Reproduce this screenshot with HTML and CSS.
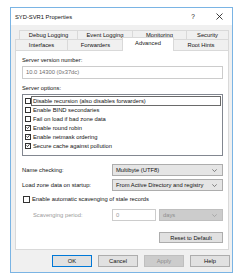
FILE: index.html
```html
<!DOCTYPE html>
<html lang="en">
<head>
    <meta charset="UTF-8">
    <title>SYD-SVR1 Properties</title>
    <link rel="stylesheet" href="styles.css">
</head>
<body>
    <div class="dialog">
        <div class="titlebar">
            <span class="title">SYD-SVR1 Properties</span>
            <span class="help-btn">?</span>
            <span class="close-btn">
                <svg width="7" height="7" viewBox="0 0 7 7"><path d="M0.5 0.5 L6.5 6.5 M6.5 0.5 L0.5 6.5" stroke="#111" stroke-width="0.8" fill="none"/></svg>
            </span>
        </div>

        <div class="tabs">
            <div class="tab-row back">
                <div class="tab w58">Debug Logging</div>
                <div class="tab w55">Event Logging</div>
                <div class="tab w54">Monitoring</div>
                <div class="tab w43 last">Security</div>
            </div>
            <div class="tab-row front">
                <div class="tab w52">Interfaces</div>
                <div class="tab w56">Forwarders</div>
                <div class="tab selected">Advanced</div>
                <div class="tab w56 last">Root Hints</div>
            </div>
        </div>

        <div class="panel">
            <div class="label">Server version number:</div>
            <div class="textbox readonly">10.0 14300 (0x37dc)</div>

            <div class="label gap">Server options:</div>
            <div class="listbox">
                <div class="item">
                    <span class="check"></span>
                    <span class="item-text focused">Disable recursion (also disables forwarders)</span>
                </div>
                <div class="item">
                    <span class="check"></span>
                    <span class="item-text">Enable BIND secondaries</span>
                </div>
                <div class="item">
                    <span class="check"></span>
                    <span class="item-text">Fail on load if bad zone data</span>
                </div>
                <div class="item">
                    <span class="check on"><svg width="5" height="5" viewBox="0 0 5 5"><path d="M0.6 2.4 L1.9 3.8 L4.4 0.9" stroke="#111" stroke-width="1" fill="none"/></svg></span>
                    <span class="item-text">Enable round robin</span>
                </div>
                <div class="item">
                    <span class="check on"><svg width="5" height="5" viewBox="0 0 5 5"><path d="M0.6 2.4 L1.9 3.8 L4.4 0.9" stroke="#111" stroke-width="1" fill="none"/></svg></span>
                    <span class="item-text">Enable netmask ordering</span>
                </div>
                <div class="item">
                    <span class="check on"><svg width="5" height="5" viewBox="0 0 5 5"><path d="M0.6 2.4 L1.9 3.8 L4.4 0.9" stroke="#111" stroke-width="1" fill="none"/></svg></span>
                    <span class="item-text">Secure cache against pollution</span>
                </div>
            </div>

            <div class="field-row first">
                <span class="field-label">Name checking:</span>
                <div class="combo wide">
                    <span>Multibyte (UTF8)</span>
                    <svg width="5" height="3" viewBox="0 0 5 3"><path d="M0.3 0.4 L2.5 2.5 L4.7 0.4" stroke="#555" stroke-width="0.7" fill="none"/></svg>
                </div>
            </div>
            <div class="field-row">
                <span class="field-label">Load zone data on startup:</span>
                <div class="combo wide">
                    <span>From Active Directory and registry</span>
                    <svg width="5" height="3" viewBox="0 0 5 3"><path d="M0.3 0.4 L2.5 2.5 L4.7 0.4" stroke="#555" stroke-width="0.7" fill="none"/></svg>
                </div>
            </div>

            <div class="check-row">
                <span class="check big"></span>
                <span>Enable automatic scavenging of stale records</span>
            </div>

            <div class="field-row scav">
                <span class="field-label disabled">Scavenging period:</span>
                <div class="textbox small disabled-input">0</div>
                <div class="combo days">
                    <span>days</span>
                    <svg width="5" height="3" viewBox="0 0 5 3"><path d="M0.3 0.4 L2.5 2.5 L4.7 0.4" stroke="#9a9a9a" stroke-width="0.7" fill="none"/></svg>
                </div>
            </div>

            <div class="reset-row">
                <button class="btn reset">Reset to Default</button>
            </div>
        </div>

        <div class="button-bar">
            <button class="btn default">OK</button>
            <button class="btn">Cancel</button>
            <button class="btn disabled">Apply</button>
            <button class="btn">Help</button>
        </div>
    </div>
</body>
</html>
```

FILE: styles.css
```css
body {
    margin: 0;
    padding: 7px 9px 0 10px;
    background-color: #ffffff;
    font-family: "Liberation Sans", Arial, sans-serif;
    font-size: 5.8px;
    line-height: 9px;
    color: #111;
}

.dialog {
    width: 223px;
    height: 266px;
    box-sizing: border-box;
    border: 1px solid #7ab4e4;
    background-color: #f0f0f0;
}

/* Title bar */
.titlebar {
    height: 17px;
    background-color: #ffffff;
    display: flex;
    align-items: center;
    padding-left: 4px;
}

.title {
    flex: 1;
    padding-top: 1px;
}

.help-btn {
    width: 26px;
    text-align: center;
    font-size: 6.5px;
}

.close-btn {
    width: 26px;
    display: flex;
    justify-content: center;
}

/* Tabs */
.tabs {
    margin-top: 5px;
    padding-left: 4px;
}

.tab-row {
    display: flex;
}

.tab-row.back {
    margin-left: 4px;
    height: 9px;
}

.tab-row.front {
    height: 11px;
    align-items: flex-end;
}

.tab {
    box-sizing: border-box;
    height: 100%;
    border-top: 1px solid #d9d9d9;
    border-left: 1px solid #d9d9d9;
    text-align: center;
    line-height: 9px;
    background-color: #f0f0f0;
}

.tab.last {
    border-right: 1px solid #d9d9d9;
}

.tab-row.front .tab {
    line-height: 10px;
}

.w58 { width: 58px; }
.w55 { width: 55px; }
.w54 { width: 54px; }
.w43 { width: 43px; }
.w52 { width: 52px; }
.w56 { width: 56px; }

.tab.selected {
    position: relative;
    z-index: 1;
    width: 52px;
    height: 14px;
    margin: 0 -1px -1px;
    border: 1px solid #d9d9d9;
    border-bottom: none;
    background-color: #ffffff;
    line-height: 10px;
}

/* Panel */
.panel {
    margin-left: 4px;
    width: 214px;
    height: 200px;
    box-sizing: border-box;
    border: 1px solid #d9d9d9;
    background-color: #ffffff;
    padding: 5px 5px 0 6px;
}

.label.gap {
    margin-top: 5px;
}

.textbox {
    box-sizing: border-box;
    height: 13px;
    margin-top: 1px;
    border: 1px solid #cccccc;
    padding-left: 3px;
    line-height: 11px;
    background-color: #ffffff;
}

.textbox.readonly {
    color: #6d6d6d;
}

.listbox {
    box-sizing: border-box;
    height: 62px;
    margin-top: 1px;
    border: 1px solid #828790;
    padding: 1px 1px 0 2px;
}

.item {
    display: flex;
    align-items: center;
    height: 9px;
}

.check {
    box-sizing: border-box;
    width: 6px;
    height: 6px;
    border: 1px solid #333;
    background-color: #fff;
    display: flex;
    align-items: center;
    justify-content: center;
    flex-shrink: 0;
}

.check.big {
    width: 7px;
    height: 7px;
}

.item-text {
    flex: 1;
    padding-left: 1px;
    line-height: 8px;
    border: 1px solid transparent;
}

.item-text.focused {
    border-color: #6a6a6a;
}

/* Field rows */
.field-row {
    display: flex;
    align-items: center;
    height: 12px;
    margin-top: 3px;
}

.field-row.first {
    margin-top: 8px;
}

.field-label {
    width: 90px;
}

.field-label.disabled {
    color: #9a9a9a;
    padding-left: 11px;
    width: 79px;
}

.combo {
    box-sizing: border-box;
    height: 12px;
    border: 1px solid #adadad;
    background-color: #e5e5e5;
    display: flex;
    align-items: center;
    justify-content: space-between;
    padding: 0 5px 0 3px;
}

.combo.wide {
    width: 111px;
}

.combo.days {
    width: 64px;
    margin-left: 3px;
    background-color: #cccccc;
    border-color: #bfbfbf;
    color: #8c8c8c;
}

.check-row {
    display: flex;
    align-items: center;
    height: 9px;
    margin-top: 4px;
    padding-left: 1px;
    gap: 2px;
}

.field-row.scav {
    margin-top: 5px;
}

.textbox.small {
    width: 44px;
    height: 12px;
    margin-top: 0;
    line-height: 10px;
}

.disabled-input {
    color: #9a9a9a;
}

.reset-row {
    display: flex;
    justify-content: flex-end;
    margin-top: 11px;
}

/* Buttons */
.btn {
    box-sizing: border-box;
    width: 40px;
    height: 12px;
    padding: 0;
    border: 1px solid #adadad;
    background-color: #e1e1e1;
    font-family: "Liberation Sans", Arial, sans-serif;
    font-size: 5.8px;
    color: #111;
}

.btn.reset {
    width: 64px;
    height: 11px;
}

.btn.default {
    border-color: #0078d7;
}

.btn.disabled {
    background-color: #cccccc;
    border-color: #bfbfbf;
    color: #8c8c8c;
}

.button-bar {
    display: flex;
    justify-content: flex-end;
    gap: 6px;
    margin-top: 5px;
    padding-right: 2px;
}
```
